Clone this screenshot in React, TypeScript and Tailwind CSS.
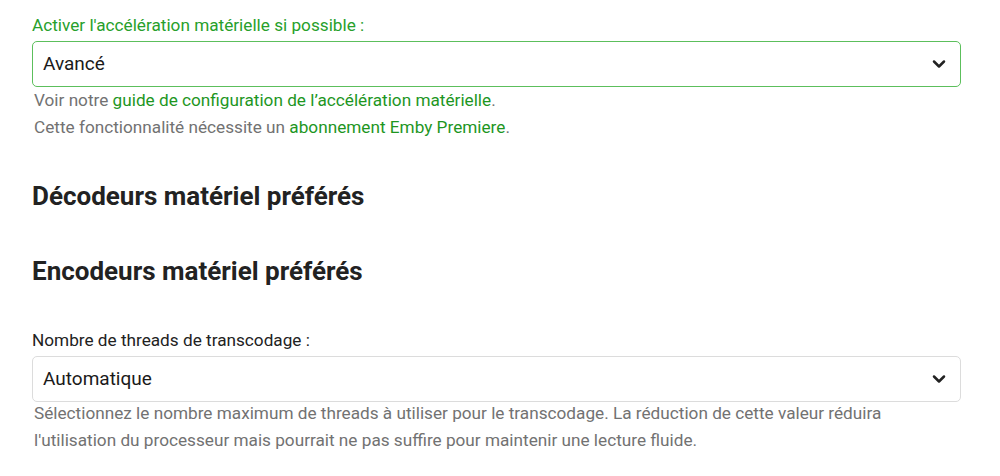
import { ChevronDown } from 'lucide-react';

function Select({ value, focused }: { value: string; focused?: boolean }) {
  return (
    <div
      className={`flex items-center justify-between h-[46px] rounded-[5px] border px-[10px] bg-white ${
        focused ? 'border-[#5cbf5c]' : 'border-[#dcdcdc]'
      }`}
    >
      <span className="text-[19px] text-[#1a1a1a]">{value}</span>
      <ChevronDown size={20} strokeWidth={3} className="text-[#222] mr-[1px]" />
    </div>
  );
}

export default function App() {
  return (
    <div className="w-[1000px] h-[476px] bg-white overflow-hidden font-['Roboto',sans-serif] pl-[32px] pr-[39px] pt-[14px]">
      <label className="block text-[17.2px] leading-[22px] text-[#27a02b] mb-[5px]">
        Activer l'accélération matérielle si possible :
      </label>
      <Select value="Avancé" focused />
      <div className="pl-[2px] text-[17.2px] leading-[27px] text-[#727272]">
        <div>
          Voir notre <span className="text-[#1e961f]">guide de configuration de l’accélération matérielle</span>.
        </div>
        <div>
          Cette fonctionnalité nécessite un <span className="text-[#1e961f]">abonnement Emby Premiere</span>.
        </div>
      </div>

      <h2 className="mt-[40px] text-[26px] leading-[30px] font-bold text-[#222]">Décodeurs matériel préférés</h2>
      <h2 className="mt-[45px] text-[26px] leading-[30px] font-bold text-[#222]">Encodeurs matériel préférés</h2>

      <label className="block mt-[43px] text-[17.2px] leading-[22px] text-[#222] mb-[5px]">
        Nombre de threads de transcodage :
      </label>
      <Select value="Automatique" />
      <div className="pl-[2px] mt-[-2px] max-w-[900px] text-[17.2px] leading-[27px] text-[#727272]">
        Sélectionnez le nombre maximum de threads à utiliser pour le transcodage. La réduction de cette valeur réduira
        l'utilisation du processeur mais pourrait ne pas suffire pour maintenir une lecture fluide.
      </div>
    </div>
  );
}
